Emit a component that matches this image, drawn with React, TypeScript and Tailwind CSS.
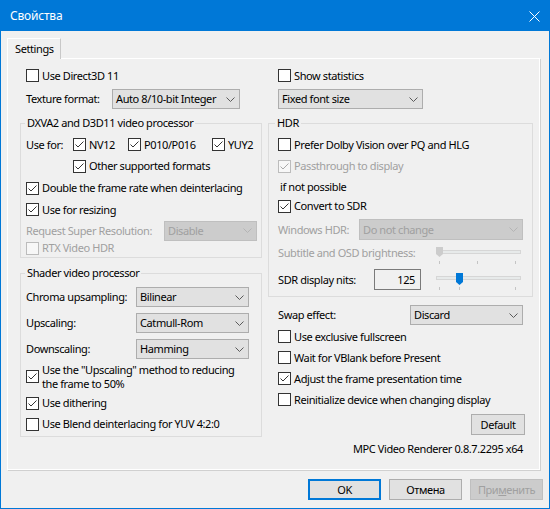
import type { ReactNode } from 'react';

// Windows 10 style "Свойства" property sheet for MPC Video Renderer

function Box({ checked = false, disabled = false }: { checked?: boolean; disabled?: boolean }) {
  return (
    <span
      className={`w-[13px] h-[13px] shrink-0 border flex items-center justify-center ${
        disabled ? 'border-[#bcbcbc] bg-[#f7f7f7]' : 'border-[#333333] bg-white'
      }`}
    >
      {checked && (
        <svg width="11" height="11" viewBox="0 0 11 11">
          <path d="M1.5 5.5 L4 8 L9.5 2.5" fill="none" stroke={disabled ? '#a8a8a8' : '#333333'} strokeWidth="1" />
        </svg>
      )}
    </span>
  );
}

function Check({
  label,
  checked = false,
  disabled = false,
  className = '',
}: {
  label: ReactNode;
  checked?: boolean;
  disabled?: boolean;
  className?: string;
}) {
  return (
    <div className={`flex items-center gap-[3px] ${disabled ? 'text-[#a0a0a0]' : ''} ${className}`}>
      <Box checked={checked} disabled={disabled} />
      <span className="whitespace-nowrap">{label}</span>
    </div>
  );
}

function Chevron({ disabled = false }: { disabled?: boolean }) {
  return (
    <svg width="9" height="5" viewBox="0 0 9 5" className="shrink-0">
      <path d="M0.5 0.5 L4.5 4.5 L8.5 0.5" fill="none" stroke={disabled ? '#b4b4b4' : '#5a5a5a'} strokeWidth="1" />
    </svg>
  );
}

function Combo({ value, w, h = 'h-[20px]', disabled = false }: { value: string; w: string; h?: string; disabled?: boolean }) {
  return (
    <div
      className={`${w} ${h} shrink-0 border flex items-center justify-between pl-[3px] pr-[4px] ${
        disabled ? 'bg-[#cccccc] border-[#bfbfbf] text-[#a0a0a0]' : 'bg-[#e1e1e1] border-[#adadad]'
      }`}
    >
      <span className="whitespace-nowrap">{value}</span>
      <Chevron disabled={disabled} />
    </div>
  );
}

function Group({ title, legend, className = '', children }: { title: string; legend: string; className?: string; children: ReactNode }) {
  return (
    <fieldset className={`border border-[#dcdcdc] ${className}`}>
      <legend className={`${legend} px-[2px] leading-[16px]`}>{title}</legend>
      {children}
    </fieldset>
  );
}

function Slider({
  thumbX,
  thumbY,
  thumbH,
  ticks,
  disabled = false,
  className = '',
}: {
  thumbX: number;
  thumbY: number;
  thumbH: number;
  ticks: number[];
  disabled?: boolean;
  className?: string;
}) {
  const thumb = `M${thumbX} ${thumbY} h7 v${thumbH - 3} l-3.5 3 l-3.5 -3 z`;
  return (
    <svg width="90" height="26" viewBox="0 0 90 26" className={`shrink-0 self-start ${className}`}>
      <rect x="2.5" y="10.5" width="84" height="3" fill="#e7eaea" stroke="#d6d6d6" />
      {ticks.map((t) => (
        <line key={t} x1={t + 0.5} y1="21" x2={t + 0.5} y2="24" stroke="#c4c4c4" />
      ))}
      <path d={thumb} fill={disabled ? '#cccccc' : '#0078d7'} />
    </svg>
  );
}

function Button({ children, kind = 'normal' }: { children: ReactNode; kind?: 'default' | 'normal' | 'disabled' }) {
  const cls =
    kind === 'default'
      ? 'border-2 border-[#0078d7] bg-[#e1e1e1]'
      : kind === 'disabled'
        ? 'border border-[#bfbfbf] bg-[#cccccc] text-[#a0a0a0]'
        : 'border border-[#adadad] bg-[#e1e1e1]';
  return <div className={`w-[73px] h-[21px] flex items-center justify-center ${cls}`}>{children}</div>;
}

export default function App() {
  return (
    <div className="w-[550px] h-[509px] flex flex-col bg-[#f0f0f0] border border-[#0078d7] text-[11px] leading-[16px] tracking-[-0.4px] text-black font-['Noto_Sans',sans-serif] overflow-hidden select-none">
      {/* Title bar */}
      <div className="h-[30px] shrink-0 bg-[#0078d7] flex items-center justify-between pl-[9px] pr-[9px] text-white">
        <span className="text-[12px] tracking-[-0.2px]">Свойства</span>
        <svg width="11" height="11" viewBox="0 0 11 11">
          <path d="M0.5 0.5 L10.5 10.5 M10.5 0.5 L0.5 10.5" stroke="#ffffff" strokeWidth="1" />
        </svg>
      </div>

      <div className="flex-1 flex flex-col pl-[6px] pt-[7px]">
        {/* Tab strip */}
        <div className="flex">
          <div className="relative z-10 -mb-px h-[21px] w-[54px] pl-[7px] bg-[#f0f0f0] border-t border-l border-r border-t-white border-l-white border-r-[#c8c8c8] flex items-center">
            Settings
          </div>
        </div>

        {/* Tab page */}
        <div className="w-[533px] h-[412px] border border-white shadow-[1px_1px_0_0_#d0d0d0] flex gap-[6px] pl-[12px] pt-[6px]">
          {/* Left column */}
          <div className="w-[242px] flex flex-col">
            <div className="h-[21px] flex items-center pl-[6px]">
              <Check label="Use Direct3D 11" />
            </div>
            <div className="mt-[3px] h-[20px] flex items-center pl-[6px]">
              <span className="w-[86px]">Texture format:</span>
              <Combo value="Auto 8/10-bit Integer" w="w-[128px]" />
            </div>

            <Group title="DXVA2 and D3D11 video processor" legend="ml-[4px]" className="mt-[6px]">
              <div className="pl-[5px] pt-[3px] pb-[2px] flex flex-col">
                <div className="h-[21px] flex items-center">
                  <span className="w-[47px]">Use for:</span>
                  <Check label="NV12" checked className="w-[55px]" />
                  <Check label="P010/P016" checked className="w-[84px]" />
                  <Check label="YUY2" checked />
                </div>
                <div className="h-[22px] flex items-center pl-[47px]">
                  <Check label="Other supported formats" checked />
                </div>
                <div className="h-[22px] flex items-center">
                  <Check label="Double the frame rate when deinterlacing" checked />
                </div>
                <div className="h-[21px] flex items-center">
                  <Check label="Use for resizing" checked />
                </div>
                <div className="h-[21px] flex items-center">
                  <span className="w-[138px] text-[#a0a0a0] whitespace-nowrap">Request Super Resolution:</span>
                  <Combo value="Disable" w="w-[93px]" disabled />
                </div>
                <div className="h-[14px] flex items-center">
                  <Check label="RTX Video HDR" disabled />
                </div>
              </div>
            </Group>

            <Group title="Shader video processor" legend="ml-[4px]" className="mt-[7px]">
              <div className="pl-[5px] pt-[6px] pb-[2px] flex flex-col">
                <div className="h-[20px] flex items-center">
                  <span className="w-[110px]">Chroma upsampling:</span>
                  <Combo value="Bilinear" w="w-[113px]" />
                </div>
                <div className="mt-[6px] h-[20px] flex items-center">
                  <span className="w-[110px]">Upscaling:</span>
                  <Combo value="Catmull-Rom" w="w-[113px]" />
                </div>
                <div className="mt-[6px] h-[20px] flex items-center">
                  <span className="w-[110px]">Downscaling:</span>
                  <Combo value="Hamming" w="w-[113px]" />
                </div>
                <div className="mt-[4px] h-[27px] flex items-center gap-[3px]">
                  <Box checked />
                  <span className="leading-[14px] whitespace-nowrap">
                    Use the "Upscaling" method to reducing
                    <br />
                    the frame to 50%
                  </span>
                </div>
                <div className="mt-[3px] h-[20px] flex items-center">
                  <Check label="Use dithering" checked />
                </div>
                <div className="mt-[1px] h-[20px] flex items-center">
                  <Check label="Use Blend deinterlacing for YUV 4:2:0" />
                </div>
              </div>
            </Group>
          </div>

          {/* Right column */}
          <div className="w-[265px] flex flex-col">
            <div className="h-[21px] flex items-center pl-[10px]">
              <Check label="Show statistics" />
            </div>
            <div className="mt-[3px] h-[20px] flex items-center pl-[10px]">
              <Combo value="Fixed font size" w="w-[145px]" />
            </div>

            <Group title="HDR" legend="ml-[6px]" className="mt-[6px]">
              <div className="pl-[9px] pt-[3px] pb-[6px] flex flex-col">
                <div className="h-[21px] flex items-center">
                  <Check label="Prefer Dolby Vision over PQ and HLG" />
                </div>
                <div className="h-[22px] flex items-center">
                  <Check label="Passthrough to display" checked disabled />
                </div>
                <div className="h-[19px] flex items-center pl-[2px]">if not possible</div>
                <div className="h-[20px] flex items-center">
                  <Check label="Convert to SDR" checked />
                </div>
                <div className="mt-[3px] h-[21px] flex items-center">
                  <span className="w-[81px] text-[#a0a0a0] whitespace-nowrap">Windows HDR:</span>
                  <Combo value="Do not change" w="w-[164px]" h="h-[21px]" disabled />
                </div>
                <div className="h-[26px] flex items-center">
                  <span className="w-[156px] text-[#a0a0a0] whitespace-nowrap">Subtitle and OSD brightness:</span>
                  <Slider thumbX={2} thumbY={7} thumbH={10} ticks={[5, 43, 81]} disabled />
                </div>
                <div className="mt-[3px] h-[21px] flex items-center">
                  <span className="w-[96px] whitespace-nowrap">SDR display nits:</span>
                  <div className="w-[47px] h-[21px] border border-[#7a7a7a] bg-[#f0f0f0] flex items-center justify-end pr-[5px]">
                    125
                  </div>
                  <Slider thumbX={22} thumbY={7} thumbH={12} ticks={[5, 25, 81]} className="ml-[13px] -mt-[3px]" />
                </div>
              </div>
            </Group>

            <div className="mt-[8px] h-[20px] flex items-center pl-[10px]">
              <span className="w-[132px]">Swap effect:</span>
              <Combo value="Discard" w="w-[113px]" />
            </div>
            <div className="mt-[1px] h-[21px] flex items-center pl-[10px]">
              <Check label="Use exclusive fullscreen" />
            </div>
            <div className="h-[21px] flex items-center pl-[10px]">
              <Check label="Wait for VBlank before Present" />
            </div>
            <div className="h-[21px] flex items-center pl-[10px]">
              <Check label="Adjust the frame presentation time" checked />
            </div>
            <div className="h-[21px] flex items-center pl-[10px]">
              <Check label="Reinitialize device when changing display" />
            </div>
            <div className="mt-[4px] flex justify-end pr-[8px]">
              <div className="w-[54px] h-[21px] border border-[#adadad] bg-[#e1e1e1] flex items-center justify-center">
                Default
              </div>
            </div>
            <div className="mt-[6px] h-[16px] flex justify-end pr-[10px] whitespace-nowrap">
              MPC Video Renderer 0.8.7.2295 x64
            </div>
          </div>
        </div>

        {/* Dialog buttons */}
        <div className="mt-[9px] flex justify-end gap-[8px] pr-[6px]">
          <Button kind="default">OK</Button>
          <Button>Отмена</Button>
          <Button kind="disabled">
            <span>
              При<span className="underline">м</span>енить
            </span>
          </Button>
        </div>
      </div>
    </div>
  );
}
